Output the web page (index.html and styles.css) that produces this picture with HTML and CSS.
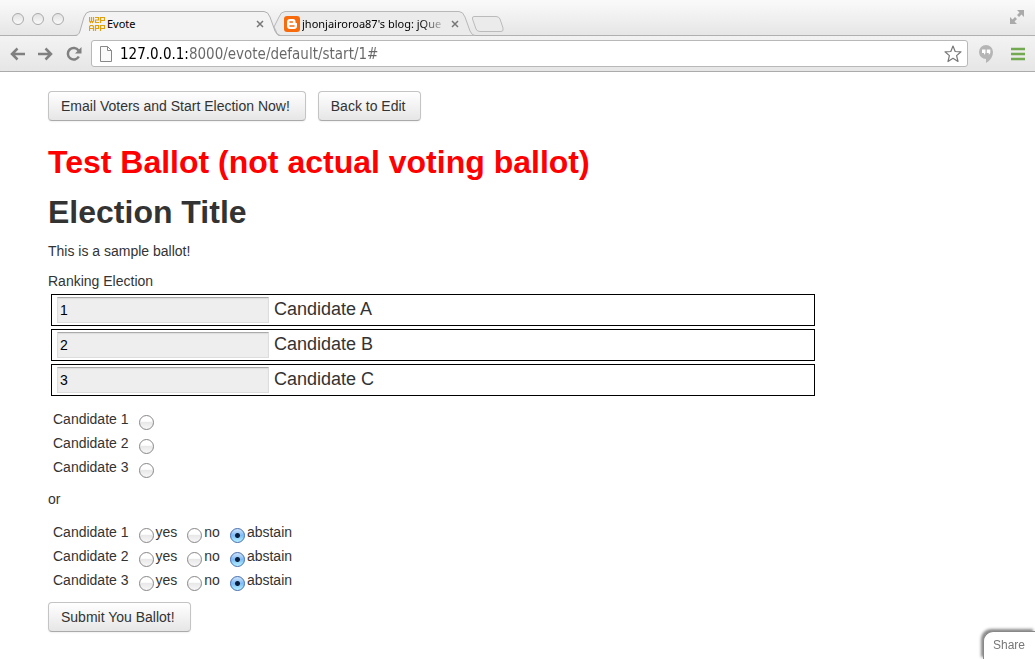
FILE: index.html
```html
<!DOCTYPE html>
<html lang="en">
<head>
<meta charset="utf-8">
<title>Evote</title>
<link rel="stylesheet" href="styles.css">
</head>
<body>
<header class="chrome">
  <div class="tabstrip">
    <div class="lights">
      <button class="light" aria-label="Close window"></button>
      <button class="light" aria-label="Minimise window"></button>
      <button class="light" aria-label="Zoom window"></button>
    </div>
    <div class="tabs">
      <div class="tab tab-active">
        <svg class="tab-shape" viewBox="0 0 206 26" preserveAspectRatio="none" aria-hidden="true"><path d="M0 25C4 25 5 23 6 20L10 6Q12 1 16 1H190Q194 1 196 6L201 20Q203 25 206 25V26H0Z" fill="#f3f3f3"/><path d="M0 24.500C4 24.500 5 23 6 20L10 6Q12 .5 16 .5H190Q194 .5 196 6L201 20Q203 24.500 206 24.500" fill="none" stroke="#b0b0b0"/></svg>
        <svg class="favicon" viewBox="0 0 16 14" fill="none" stroke="#e0a010" stroke-width="1.200" aria-hidden="true"><path d="M.5 0V4L1.500 5.500L2.500 4V0M2.500 4L3.500 5.500L4.500 4V0M6 .5H9.500V3H6.500V5.500H10M11.500 6V.5H15.500V3.500H11.500M.5 14V9.500L1.500 8.500H3.500L4.500 9.500V14M.5 11.500H4.500M6.500 14V8.500H9.500V11.500H6.500M11.500 14V8.500H15.500V11.500H11.500"/></svg>
        <a class="tab-title" href="#">Evote</a>
        <button class="tab-close" aria-label="Close Evote"><svg viewBox="0 0 8 8"><path d="M1 1L7 7M7 1L1 7" stroke="#777" stroke-width="1.500"/></svg></button>
      </div>
      <div class="tab tab-back">
        <svg class="tab-shape" viewBox="0 0 206 26" preserveAspectRatio="none" aria-hidden="true"><path d="M10 6Q12 .5 16 .5H190Q194 .5 196 6L201 20Q203 24.500 206 24.500H12Q8 24.500 7 20L5 16Z" fill="#ebebeb" stroke="#b8b8b8"/></svg>
        <svg class="favicon favicon-blog" viewBox="0 0 16 16" aria-hidden="true"><rect width="16" height="16" rx="3" fill="#f76b0c"/><path d="M6 3H9Q11.500 3 11.500 5.500V6.500Q11.500 7 12.500 7Q13 7.200 13 8V10Q13 13 10 13H6Q3 13 3 10V6Q3 3 6 3Z" fill="#fff"/><path d="M6 6H8.500M6 10H10" stroke="#f76b0c" stroke-width="1.500" stroke-linecap="round"/></svg>
        <a class="tab-title tab-fade" href="#">jhonjairoroa87's blog: jQue</a>
        <button class="tab-close" aria-label="Close blog"><svg viewBox="0 0 8 8"><path d="M1 1L7 7M7 1L1 7" stroke="#777" stroke-width="1.500"/></svg></button>
      </div>
      <button class="new-tab" aria-label="New tab"><svg viewBox="0 0 34 18"><path d="M3 1.500H25Q28 1.500 29 4L32 13Q33 16.500 30 16.500H9Q6 16.500 5 14L1.500 4Q1 1.500 3 1.500Z" fill="#ebebeb" stroke="#bbb"/></svg></button>
    </div>
    <button class="fullscreen" aria-label="Full screen"><svg viewBox="0 0 16 16" fill="#aaa"><path d="M8 1H15V8L12.500 5.500L10 8L8 6L10.500 3.500ZM1 8L3.500 10.500L6 8L8 10L5.500 12.500L8 15H1Z"/></svg></button>
  </div>
  <div class="toolbar">
    <button class="nav" aria-label="Back"><svg viewBox="0 0 16 16"><path d="M15 8H2M7.500 2.500L2 8L7.500 13.500" fill="none" stroke="#808080" stroke-width="2.500"/></svg></button>
    <button class="nav" aria-label="Forward"><svg viewBox="0 0 16 16"><path d="M0 8H13M7.500 2.500L13 8L7.500 13.500" fill="none" stroke="#808080" stroke-width="2.500"/></svg></button>
    <button class="nav" aria-label="Reload"><svg viewBox="0 0 16 16"><path d="M12.500 4.500A5.800 5.800 0 1 0 12.800 10.500" fill="none" stroke="#808080" stroke-width="2.500"/><path d="M15.500 1V7.500H9Z" fill="#808080"/></svg></button>
    <div class="omnibox">
      <svg class="page-icon" viewBox="0 0 12 16"><path d="M1 .5H7.500L11.500 4.500V15.500H.5V.5ZM7.500 .5V4.500H11.500" fill="#fafafa" stroke="#888"/></svg>
      <input class="address" type="text" aria-label="Address" value="127.0.0.1:8000/evote/default/start/1#">
      <button class="star" aria-label="Bookmark"><svg viewBox="0 0 18 18"><path d="M9 1L11.200 6.500L17 6.800L12.600 10.600L14 16.500L9 13.300L4 16.500L5.400 10.600L1 6.800L6.800 6.500Z" fill="#fff" stroke="#777" stroke-width="1.200" stroke-linejoin="round"/></svg></button>
    </div>
    <button class="ext" aria-label="Hangouts"><svg viewBox="0 0 14 18"><path d="M7 0A7 7 0 0 1 14 7Q14 14 7 18V14A7 7 0 0 1 7 0Z" fill="#b5b5b5"/><path d="M3 4.500H6.500V8L5 10V8H3ZM7.800 4.500H11.300V8L9.800 10V8H7.800Z" fill="#fff"/></svg></button>
    <button class="menu" aria-label="Menu"><svg viewBox="0 0 14 14"><path d="M0 2H14M0 7H14M0 12H14" stroke="#72a951" stroke-width="2.600"/></svg></button>
  </div>
</header>

<main class="page">
  <div class="actions">
    <button class="btn">Email Voters and Start Election Now!</button>
    <button class="btn">Back to Edit</button>
  </div>
  <h2 class="title warning">Test Ballot (not actual voting ballot)</h2>
  <h2 class="title">Election Title</h2>
  <form class="ballot">
    <p class="para">This is a sample ballot!</p>
    <p class="para ranking-label">Ranking Election</p>
    <ul class="ranking">
      <li class="rank"><input class="rank-input" id="rank-a" type="text" value="1" readonly><label for="rank-a">Candidate A</label></li>
      <li class="rank"><input class="rank-input" id="rank-b" type="text" value="2" readonly><label for="rank-b">Candidate B</label></li>
      <li class="rank"><input class="rank-input" id="rank-c" type="text" value="3" readonly><label for="rank-c">Candidate C</label></li>
    </ul>
    <table class="choices">
      <tr><td><label for="c1">Candidate 1</label></td><td><input class="radio" type="radio" id="c1" name="pick"></td></tr>
      <tr><td><label for="c2">Candidate 2</label></td><td><input class="radio" type="radio" id="c2" name="pick"></td></tr>
      <tr><td><label for="c3">Candidate 3</label></td><td><input class="radio" type="radio" id="c3" name="pick"></td></tr>
    </table>
    <p class="para divider">or</p>
    <table class="choices">
      <tr><td>Candidate 1</td><td><label class="option"><input class="radio" type="radio" name="v1">yes</label></td><td><label class="option"><input class="radio" type="radio" name="v1">no</label></td><td><label class="option"><input class="radio" type="radio" name="v1" checked>abstain</label></td></tr>
      <tr><td>Candidate 2</td><td><label class="option"><input class="radio" type="radio" name="v2">yes</label></td><td><label class="option"><input class="radio" type="radio" name="v2">no</label></td><td><label class="option"><input class="radio" type="radio" name="v2" checked>abstain</label></td></tr>
      <tr><td>Candidate 3</td><td><label class="option"><input class="radio" type="radio" name="v3">yes</label></td><td><label class="option"><input class="radio" type="radio" name="v3">no</label></td><td><label class="option"><input class="radio" type="radio" name="v3" checked>abstain</label></td></tr>
    </table>
    <button class="btn" type="submit">Submit You Ballot!</button>
  </form>
</main>
<a class="share" href="#">Share</a>
</body>
</html>
```
FILE: styles.css
```css
* { box-sizing: border-box; }
body {
  margin: 0;
  background: #fff;
  color: #333;
  font: 14px/20px "Liberation Sans", Arial, sans-serif;
}
button { padding: 0; border: 0; background: none; font: inherit; color: inherit; }
svg { display: block; }

.chrome { border-bottom: 1px solid #ababab; background: #f0f0f0; }
.tabstrip {
  display: flex;
  height: 36px;
  border-bottom: 1px solid #b0b0b0;
  background: linear-gradient(#fafafa, #e6e6e6);
}
.lights { display: flex; gap: 8px; padding: 13px 10px 0 12px; }
.light {
  width: 12px;
  height: 12px;
  border: 1px solid #aaa;
  border-radius: 50%;
  background: linear-gradient(#e2e2e2, #fafafa);
}
.tabs { display: flex; flex: 1; padding-top: 11px; }
.tab {
  position: relative;
  display: flex;
  align-items: center;
  width: 206px;
  height: 26px;
  padding: 0 16px 0 15px;
  font: 11px/16px "Noto Sans", sans-serif;
}
.tab-active { z-index: 1; }
.tab-back { z-index: 0; margin-left: -11px; }
.tab-shape { position: absolute; inset: 0; width: 100%; height: 100%; z-index: -1; }
.favicon { width: 16px; height: 14px; margin-right: 2px; }
.favicon-blog { height: 16px; }
.tab-title {
  flex: 1;
  color: #000;
  white-space: nowrap;
  text-decoration: none;
}
.tab-fade { mask-image: linear-gradient(to right, #000 82%, transparent); }
.tab-close { width: 8px; height: 8px; margin-left: 4px; }
.new-tab { width: 34px; height: 18px; margin: 4px 0 0 -4px; }
.fullscreen { width: 16px; height: 16px; margin: 9px 10px 0 0; }

.toolbar {
  display: flex;
  align-items: center;
  height: 35px;
  padding: 0 10px;
  background: linear-gradient(#f3f3f3, #e6e6e6);
}
.nav { width: 16px; height: 16px; margin-right: 12px; }
.omnibox {
  display: flex;
  flex: 1;
  align-items: center;
  height: 27px;
  margin: 0 11px 0 -3px;
  padding: 0 5px 0 8px;
  border: 1px solid #b8b8b8;
  border-radius: 3px;
  background: #fff;
}
.page-icon { width: 12px; height: 16px; }
.address {
  flex: 1;
  min-width: 0;
  height: 24px;
  padding: 0 0 0 8px;
  border: 0;
  outline: 0;
  background: linear-gradient(to right, #000 78px, #666 78px) text;
  color: transparent;
  font: 15px/24px "DejaVu Sans Condensed", "DejaVu Sans", sans-serif;
}
.star { width: 18px; height: 18px; }
.ext { width: 14px; height: 18px; margin-right: 18px; }
.menu { width: 14px; height: 14px; }

.page { padding: 19px 48px 27px; }
.actions { display: flex; gap: 12px; margin-bottom: 21px; }
.btn {
  height: 30px;
  padding: 0 15px 0 12px;
  border: 1px solid #c4c4c4;
  border-bottom-color: #aaa;
  border-radius: 4px;
  background: linear-gradient(#fff, #e6e6e6);
  box-shadow: 0 1px 2px rgba(0, 0, 0, .06);
}
.title { margin: 0 0 9px; font-size: 32px; line-height: 40px; }
.warning { margin-bottom: 10px; color: #f00; }
.para { margin: 0 0 10px; }
.divider { margin-bottom: 11px; }
.ranking-label { margin-bottom: 3px; }
.ranking {
  display: grid;
  gap: 3px;
  max-width: 764px;
  margin: 0 3px 11px;
  padding: 0;
  list-style: none;
}
.rank {
  display: flex;
  align-items: center;
  gap: 5px;
  height: 32px;
  padding: 0 5px;
  border: 1px solid #000;
  font-size: 18px;
}
.rank label { padding-bottom: 2px; }
.rank-input {
  width: 212px;
  height: 26px;
  padding: 2px;
  border: 1px solid #ddd;
  border-top: 1px solid #aaa;
  background: #eee;
  box-shadow: inset 0 1px 1px #ddd;
  color: #000;
  font: 14px/20px "Liberation Sans", Arial, sans-serif;
}
.choices { margin-bottom: 10px; border-collapse: collapse; }
.choices td { height: 24px; padding: 0 5px; vertical-align: middle; }
.option { display: flex; align-items: center; gap: 2px; }
.radio {
  display: block;
  width: 15px;
  height: 15px;
  margin: 6px 0 0;
  border: 1px solid #888;
  border-radius: 50%;
  background: linear-gradient(#fff 40%, #e8e8e8 50%, #f8f8f8);
  appearance: none;
}
.radio:checked {
  border-color: #4a6fae;
  background: radial-gradient(circle, #0c1f3c 2px, transparent 3px), linear-gradient(#cfe3fa, #7cbcf5 50%, #b5f0ff);
}

.share {
  position: fixed;
  right: 0;
  bottom: 0;
  padding: 3px 10px 4px 9px;
  border: 1px solid #888;
  border-width: 1px 0 0 1px;
  border-top-left-radius: 10px;
  background: #fff;
  box-shadow: -2px -2px 3px 0 #888;
  color: #777;
  font-size: 12px;
  text-decoration: none;
}
```
